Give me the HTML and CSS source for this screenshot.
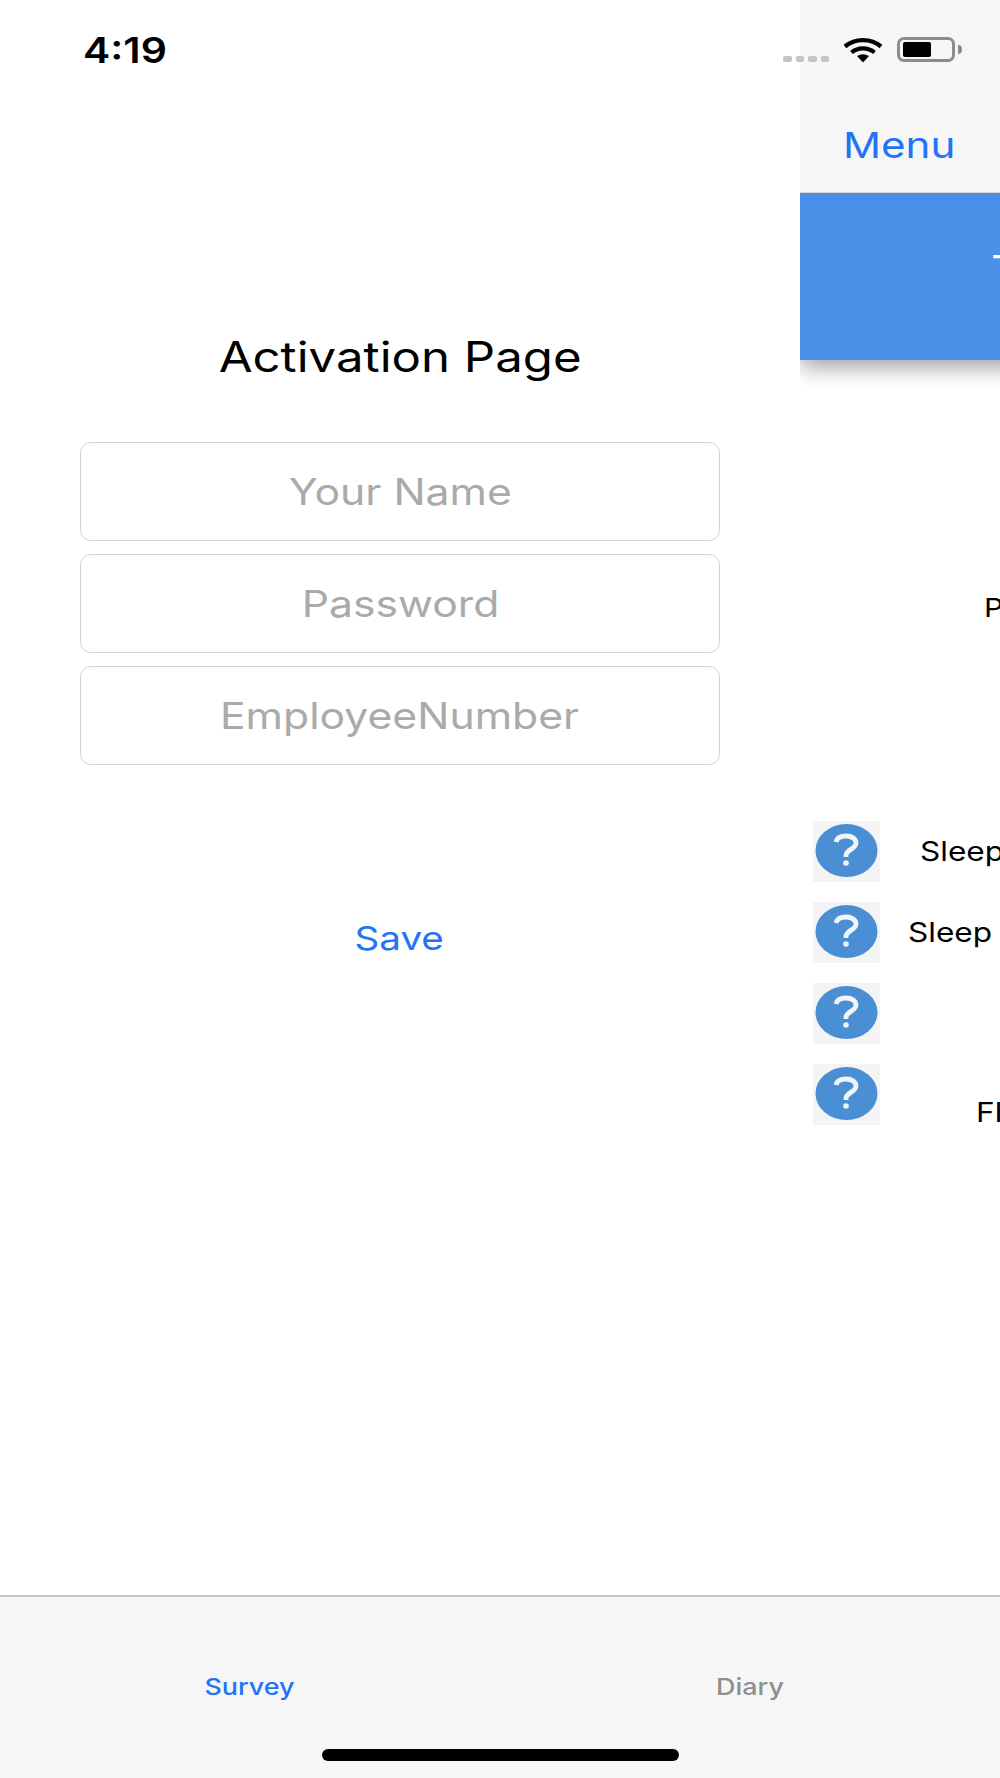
FILE: index.html
```html
<!DOCTYPE html>
<html lang="en">
<head>
    <meta charset="UTF-8">
    <meta name="viewport" content="width=device-width, initial-scale=1.0">
    <title>Activation Page</title>
    <link rel="stylesheet" href="styles.css">
</head>
<body>
    <div class="phone">
        <div class="status-bar">
            <span class="time wide">4:19</span>
            <div class="status-icons">
                <div class="signal"><i></i><i></i><i></i><i></i></div>
                <svg class="wifi" width="40" height="26" viewBox="0 0 40 26">
                    <path d="M2 9.5 C12 1 28 1 38 9.5" fill="none" stroke="#000" stroke-width="4.4"/>
                    <path d="M8.5 15.5 C15 10 25 10 31.5 15.5" fill="none" stroke="#000" stroke-width="4.2"/>
                    <path d="M14 19 Q20 15.5 26 19 L20 25.5 Z" fill="#000"/>
                </svg>
                <div class="battery"><div class="battery-level"></div></div>
                <div class="battery-nub"></div>
            </div>
        </div>

        <div class="panes">
            <div class="activation">
                <h1 class="title"><span class="wide">Activation Page</span></h1>
                <div class="fields">
                    <div class="field"><span class="wide">Your Name</span></div>
                    <div class="field"><span class="wide">Password</span></div>
                    <div class="field"><span class="wide">EmployeeNumber</span></div>
                </div>
                <div class="save"><span class="wide">Save</span></div>
            </div>

            <div class="survey">
                <div class="nav"><span class="menu wide">Menu</span></div>
                <div class="banner"><span class="banner-title wide">T</span></div>
                <div class="intro"><span class="wide">P</span></div>
                <div class="rows">
                    <div class="row">
                        <svg class="help" viewBox="0 0 67 61"><rect width="67" height="61" fill="#f4f4f4"/><ellipse cx="33.5" cy="29.5" rx="31" ry="26.5" fill="#4a8fd4"/><path d="M23 21 C24 16.5 28 15 33 15 C39 15 43 18 43 22 C43 28 34 28 33 34 L33 36" fill="none" stroke="#f0f5fa" stroke-width="4.8"/><circle cx="33" cy="42" r="2.8" fill="#f0f5fa"/></svg>
                        <span class="row-text sleep-one wide">Sleep</span>
                    </div>
                    <div class="row">
                        <svg class="help" viewBox="0 0 67 61"><rect width="67" height="61" fill="#f4f4f4"/><ellipse cx="33.5" cy="29.5" rx="31" ry="26.5" fill="#4a8fd4"/><path d="M23 21 C24 16.5 28 15 33 15 C39 15 43 18 43 22 C43 28 34 28 33 34 L33 36" fill="none" stroke="#f0f5fa" stroke-width="4.8"/><circle cx="33" cy="42" r="2.8" fill="#f0f5fa"/></svg>
                        <span class="row-text sleep-two wide">Sleep</span>
                    </div>
                    <div class="row">
                        <svg class="help" viewBox="0 0 67 61"><rect width="67" height="61" fill="#f4f4f4"/><ellipse cx="33.5" cy="29.5" rx="31" ry="26.5" fill="#4a8fd4"/><path d="M23 21 C24 16.5 28 15 33 15 C39 15 43 18 43 22 C43 28 34 28 33 34 L33 36" fill="none" stroke="#f0f5fa" stroke-width="4.8"/><circle cx="33" cy="42" r="2.8" fill="#f0f5fa"/></svg>
                    </div>
                    <div class="row">
                        <svg class="help" viewBox="0 0 67 61"><rect width="67" height="61" fill="#f4f4f4"/><ellipse cx="33.5" cy="29.5" rx="31" ry="26.5" fill="#4a8fd4"/><path d="M23 21 C24 16.5 28 15 33 15 C39 15 43 18 43 22 C43 28 34 28 33 34 L33 36" fill="none" stroke="#f0f5fa" stroke-width="4.8"/><circle cx="33" cy="42" r="2.8" fill="#f0f5fa"/></svg>
                        <span class="row-text fl wide">Fl</span>
                    </div>
                </div>
            </div>
        </div>

        <div class="tabs">
            <div class="tab-row">
                <div class="tab active"><span class="wide">Survey</span></div>
                <div class="tab"><span class="wide">Diary</span></div>
            </div>
            <div class="home-bar"></div>
        </div>
    </div>
</body>
</html>
```

FILE: styles.css
```css
* {
    margin: 0;
    padding: 0;
    box-sizing: border-box;
    font-family: Inter, 'Liberation Sans', sans-serif;
}

body {
    background: white;
}

.phone {
    position: relative;
    width: 1000px;
    height: 1778px;
    overflow: hidden;
    display: flex;
    flex-direction: column;
}

/* the screenshot is stretched sideways, so the text is too */
.wide {
    display: inline-block;
    transform: scaleX(1.17);
}

.status-bar {
    position: absolute;
    top: 0;
    left: 0;
    width: 100%;
    height: 100px;
    padding: 30px 38px 0 83px;
    display: flex;
    justify-content: space-between;
    z-index: 2;
}

.time {
    font-size: 35px;
    font-weight: 600;
    line-height: 41px;
    color: #000;
    transform-origin: left;
}

.status-icons {
    display: flex;
    align-items: flex-start;
    padding-top: 7px;
}

.signal {
    display: flex;
    gap: 4px;
    margin-top: 19px;
    margin-right: 14px;
}

.signal i {
    width: 8.5px;
    height: 6px;
    border-radius: 2px;
    background: #c4c4c4;
}

.wifi {
    margin-right: 14px;
}

.battery {
    width: 58px;
    height: 25px;
    border: 3px solid #8c8c8c;
    border-radius: 7px;
    padding: 2px 3px;
    background: transparent;
}

.battery-level {
    width: 28px;
    height: 15px;
    border-radius: 2px;
    background: #000;
}

.battery-nub {
    width: 4px;
    height: 9px;
    margin: 8px 0 0 3px;
    border-radius: 0 4px 4px 0;
    background: #8c8c8c;
}

.panes {
    flex: 1;
    display: flex;
    min-height: 0;
}

.activation {
    flex: 0 0 800px;
    padding: 333px 80px 0;
    background: white;
}

.title {
    height: 48px;
    font-size: 42px;
    font-weight: 400;
    line-height: 48px;
    text-align: center;
    color: #000;
}

.fields {
    margin-top: 61px;
    display: flex;
    flex-direction: column;
    gap: 13px;
}

.field {
    height: 99px;
    border: 1.5px solid #d4d4d4;
    border-radius: 11px;
    display: flex;
    align-items: center;
    justify-content: center;
    font-size: 36.5px;
    color: #aaa;
}

.save {
    margin-top: 150px;
    padding-right: 2px;
    font-size: 33px;
    line-height: 46px;
    text-align: center;
    color: #2472f5;
}

.survey {
    flex: 0 0 800px;
    background: white;
    overflow: hidden;
}

/* sits above the banner so its shadow only shows below */
.nav {
    position: relative;
    z-index: 1;
    height: 193px;
    padding: 121px 0 0 43px;
    background: #f6f6f6;
    border-bottom: 1px solid #d8d8d8;
}

.menu {
    font-size: 36px;
    line-height: 48px;
    color: #2472f5;
    transform-origin: left;
}

.banner {
    height: 167px;
    padding: 52px 0 0 191px;
    background: #4a90e9;
    box-shadow: 0 6px 22px rgba(0, 0, 0, 0.4);
}

.banner-title {
    font-size: 40px;
    line-height: 50px;
    color: white;
    transform-origin: left;
}

.intro {
    margin-top: 233px;
    padding-left: 184px;
    font-size: 26px;
    line-height: 30px;
    color: #000;
}

.intro .wide,
.row-text {
    transform-origin: left;
}

.rows {
    margin-top: 198px;
    padding-left: 13px;
    display: flex;
    flex-direction: column;
    gap: 20px;
}

.row {
    display: flex;
    height: 61px;
}

.help {
    flex: 0 0 67px;
    width: 67px;
    height: 61px;
}

.row-text {
    font-size: 27px;
    line-height: 30px;
    color: #000;
}

.sleep-one {
    margin: 16px 0 0 40px;
}

.sleep-two {
    margin: 16px 0 0 28px;
}

.fl {
    margin: 34px 0 0 96px;
}

.tabs {
    height: 183px;
    border-top: 2px solid #c4c4c4;
    background: #f6f6f6;
}

.tab-row {
    display: flex;
    padding-top: 75px;
}

.tab {
    flex: 1;
    font-size: 23px;
    font-weight: 500;
    line-height: 30px;
    text-align: center;
    color: #8e8e8e;
}

.tab.active {
    color: #2472f5;
}

.home-bar {
    width: 357px;
    height: 12px;
    margin: 47px auto 0;
    border-radius: 6px;
    background: #000;
}
```
